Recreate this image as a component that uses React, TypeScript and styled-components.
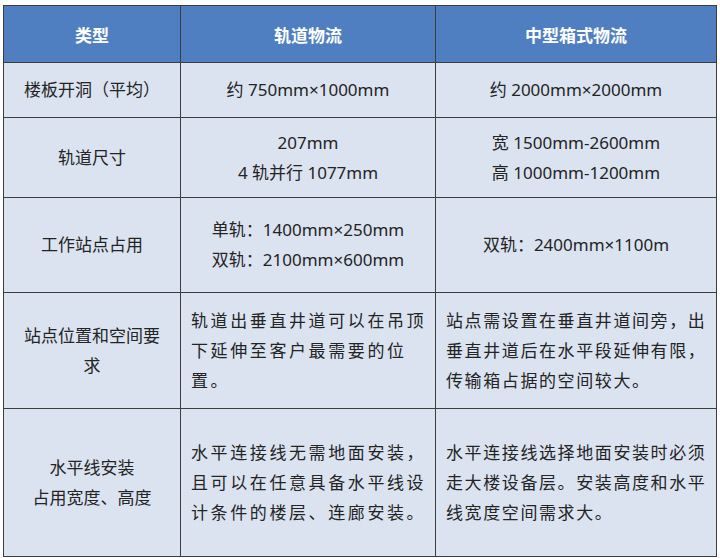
import styled, { createGlobalStyle } from "styled-components";

const GlobalStyle = createGlobalStyle`
    html, body {
        margin: 0;
        padding: 0;
        background: #ffffff;
    }
    body {
        font-family: "Noto Sans", "Noto Sans CJK SC", sans-serif;
        color: #242424;
    }
`;

type Cell = { lines: string[]; spacing?: number; left?: boolean };
type Row = { height: number; cells: Cell[] };

const rows: Row[] = [
    {
        height: 55,
        cells: [
            { lines: ["楼板开洞（平均）"] },
            { lines: ["约 750mm×1000mm"] },
            { lines: ["约 2000mm×2000mm"] },
        ],
    },
    {
        height: 80,
        cells: [
            { lines: ["轨道尺寸"] },
            { lines: ["207mm", "4 轨并行 1077mm"] },
            { lines: ["宽 1500mm-2600mm", "高 1000mm-1200mm"] },
        ],
    },
    {
        height: 95,
        cells: [
            { lines: ["工作站点占用"] },
            { lines: ["单轨：1400mm×250mm", "双轨：2100mm×600mm"] },
            { lines: ["双轨：2400mm×1100m"] },
        ],
    },
    {
        height: 116,
        cells: [
            { lines: ["站点位置和空间要", "求"] },
            {
                lines: ["轨道出垂直井道可以在吊顶", "下延伸至客户最需要的位", "置。"],
                spacing: 2.6,
                left: true,
            },
            {
                lines: ["站点需设置在垂直井道间旁，出", "垂直井道后在水平段延伸有限，", "传输箱占据的空间较大。"],
                spacing: 1.6,
                left: true,
            },
        ],
    },
    {
        height: 148,
        cells: [
            { lines: ["水平线安装", "占用宽度、高度"] },
            {
                lines: ["水平连接线无需地面安装，", "且可以在任意具备水平线设", "计条件的楼层、连廊安装。"],
                spacing: 2.6,
                left: true,
            },
            {
                lines: ["水平连接线选择地面安装时必须", "走大楼设备层。安装高度和水平", "线宽度空间需求大。"],
                spacing: 1.6,
                left: true,
            },
        ],
    },
];

const App = () => {
    return (
        <Page>
            <GlobalStyle />
            <Table>
                <colgroup>
                    <col style={{ width: 177 }} />
                    <col style={{ width: 255 }} />
                    <col style={{ width: 281 }} />
                </colgroup>
                <thead>
                    <HeadRow>
                        <Th>类型</Th>
                        <Th>轨道物流</Th>
                        <Th>中型箱式物流</Th>
                    </HeadRow>
                </thead>
                <tbody>
                    {rows.map((row, i) => (
                        <BodyRow key={i} $height={row.height}>
                            {row.cells.map((cell, j) => (
                                <Td key={j} $left={cell.left} $spacing={cell.spacing}>
                                    {cell.lines.map((line, k) => (
                                        <Line key={k}>{line}</Line>
                                    ))}
                                </Td>
                            ))}
                        </BodyRow>
                    ))}
                </tbody>
            </Table>
        </Page>
    );
};

const Page = styled.div`
    padding: 5px 4px 0 3px;
`;

const Table = styled.table`
    width: 713px;
    border-collapse: collapse;
    table-layout: fixed;
`;

const HeadRow = styled.tr`
    height: 57px;
    background: #4f7fc0;
`;

const Th = styled.th`
    border: 1px solid #3d3d3d;
    color: #ffffff;
    font-size: 17px;
    font-weight: 700;
    text-align: center;
    vertical-align: middle;
    padding: 0;
`;

const BodyRow = styled.tr<{ $height: number }>`
    height: ${(p) => p.$height}px;
    background: #dbe3f1;
`;

const Td = styled.td<{ $left?: boolean; $spacing?: number }>`
    border: 1px solid #3d3d3d;
    font-size: 17px;
    line-height: 30px;
    text-align: ${(p) => (p.$left ? "left" : "center")};
    letter-spacing: ${(p) => p.$spacing ?? 0}px;
    vertical-align: middle;
    padding: ${(p) => (p.$left ? "0 0 0 10px" : "0")};
    white-space: nowrap;
`;

const Line = styled.div`
    display: block;
`;

export default App;
